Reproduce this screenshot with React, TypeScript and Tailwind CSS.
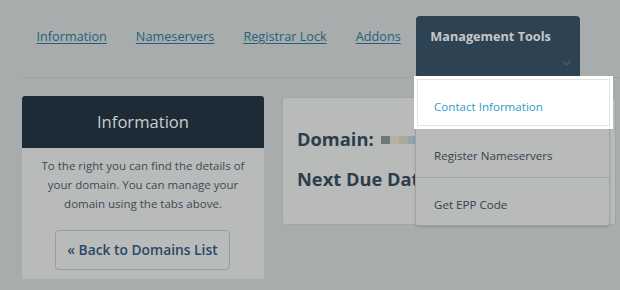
import React from "react";

const tabs = ["Information", "Nameservers", "Registrar Lock", "Addons"];

export default function App() {
    return (
        <div className="relative w-[620px] h-[290px] overflow-hidden bg-[#a9acac] font-['Open_Sans',sans-serif]">
            {/* Tabs */}
            <div className="ml-[22px] pt-[16px] flex items-stretch h-[78px] border-b border-[#9ea1a1]">
                {tabs.map((t) => (
                    <a key={t} className="px-[14.5px] pt-[10px] text-[12.7px] text-[#22627a] underline underline-offset-2 leading-[20px]">
                        {t}
                    </a>
                ))}
                <div className="ml-[1px] w-[164px] rounded-t-[4px] bg-[#2f4252] relative">
                    <div className="pl-[14px] pt-[10px] text-[12.7px] font-bold leading-[20px] text-[#c4c8cb]">Management Tools</div>
                    <svg className="absolute left-[146px] top-[44px] w-[9px] h-[6px]" viewBox="0 0 9 6" fill="none" stroke="#4d6070" strokeWidth="1.2">
                        <path d="M0.5 0.8L4.5 4.8L8.5 0.8" />
                    </svg>
                </div>
            </div>

            {/* Content */}
            <div className="flex items-start ml-[22px] mt-[18px] gap-[18px]">
                <div className="w-[242px] bg-[#b9baba] rounded-t-[3px] overflow-hidden">
                    <div className="h-[52px] flex items-center justify-center bg-[#1c2b36] text-[16.6px] text-[#c9cdd0]">Information</div>
                    <p className="mt-[8px] px-[8px] text-center text-[11.5px] leading-[19px] text-[#3c4a55]">
                        To the right you can find the details of your domain. You can manage your domain using the tabs above.
                    </p>
                    <div className="flex pl-[33px] pt-[17px] pb-[9px]">
                        <div className="w-[175px] h-[40px] rounded-[4px] border border-[#9a9d9d] flex items-center justify-center text-[13.8px] font-semibold text-[#2b4866]">
                            « Back to Domains List
                        </div>
                    </div>
                </div>

                <div className="w-[334px] h-[128px] mt-[1px] rounded-[3px] border border-[#a2a5a5] bg-[#b9baba] pl-[14px] pt-[27px]">
                    <div className="flex items-center text-[18.3px] font-bold leading-[28px] text-[#2c3e4d]">
                        Domain:
                        <span className="ml-[7px] flex h-[8px] mt-[2px]">
                            <span className="w-[9px] bg-[#6f777b]" />
                            <span className="w-[9px] bg-[#b5b3a0]" />
                            <span className="w-[9px] bg-[#aaa998]" />
                            <span className="w-[9px] bg-[#8fa4ad]" />
                        </span>
                    </div>
                    <div className="mt-[12px] text-[18.3px] font-bold leading-[28px] text-[#2c3e4d] whitespace-nowrap">Next Due Date</div>
                </div>
            </div>

            {/* Dropdown menu */}
            <div className="absolute left-[415px] top-[77px] w-[195px] bg-[#b9baba] border border-[#a0a3a3] rounded-b-[3px] shadow-[0_1px_2px_rgba(0,0,0,0.15)]">
                <div className="h-[51px]" />
                <div className="h-[49px] flex items-center pl-[18px] pt-[5px] text-[11.6px] text-[#36424c] border-b border-[#a0a3a3]">Register Nameservers</div>
                <div className="h-[47px] flex items-center pl-[18px] pt-[7px] text-[11.6px] text-[#36424c]">Get EPP Code</div>
            </div>
            {/* Highlighted item */}
            <div className="absolute left-[414px] top-[76px] w-[199px] h-[53px] bg-white p-[3px]">
                <div className="h-full border border-[#e3e3e3] flex items-center pl-[16px] pt-[8px] text-[11.6px] text-[#2f9bc4]">Contact Information</div>
            </div>
        </div>
    );
}
